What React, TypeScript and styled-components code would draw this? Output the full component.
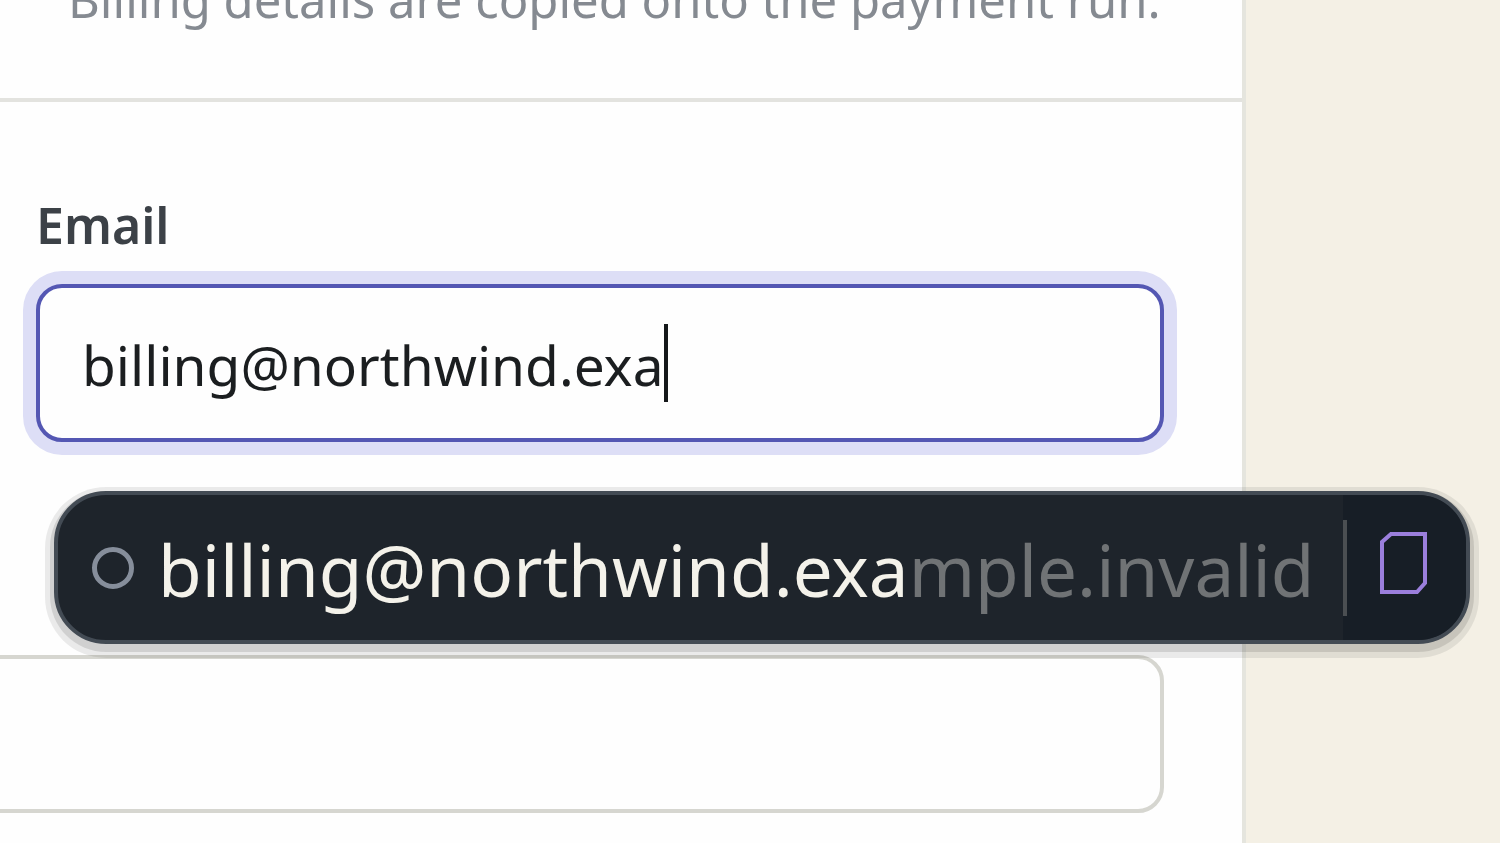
import React, { useState } from "react";
import styled, { createGlobalStyle } from "styled-components";

const GlobalStyle = createGlobalStyle`
  *, *::before, *::after { box-sizing: border-box; }
  body {
    margin: 0;
    background: #f4f0e5;
    font-family: "Noto Sans", "Open Sans", sans-serif;
    overflow: hidden;
  }
`;

const Page = styled.main`
  display: flex;
  min-height: 100vh;
  padding-right: 254px;
  overflow: hidden;
`;

const Card = styled.section`
  flex: 1;
  min-width: 0;
  background: #fefefe;
  border-right: 4px solid #e5e5de;
`;

const CardHeader = styled.header`
  display: flex;
  align-items: flex-end;
  height: 102px;
  padding: 0 68px 67px;
  border-bottom: 4px solid #e3e3df;
`;

const Note = styled.p`
  margin: 0;
  color: #858a91;
  font-size: 49px;
  line-height: 64px;
  white-space: nowrap;
`;

const Form = styled.form`
  display: flex;
  flex-direction: column;
  padding: 91px 78px 30px 36px;
`;

const Label = styled.label`
  align-self: flex-start;
  margin-bottom: 27px;
  color: #3c4147;
  font-size: 50px;
  font-weight: 600;
  line-height: 64px;
`;

const Field = styled.div`
  position: relative;
  margin-bottom: 213px;
`;

const InputFrame = styled.div`
  display: flex;
  align-items: center;
  height: 158px;
  padding: 0 42px;
  background: #fefefe;
  border: 4px solid #5457b3;
  border-radius: 26px;
  box-shadow: 0 0 0 13px #dddef6;
`;

const EmailInput = styled.input`
  field-sizing: content;
  padding: 4px 0 0;
  border: 0;
  outline: 0;
  background: transparent;
  color: #1b1e20;
  font: inherit;
  font-size: 55px;
  line-height: 80px;
  caret-color: transparent;
`;

const Caret = styled.span`
  width: 4px;
  height: 78px;
  background: #15181a;
`;

const PlainInput = styled.input`
  height: 158px;
  margin-left: -76px;
  padding: 0 40px;
  background: #fefefe;
  border: 4px solid #d6d6d0;
  border-radius: 26px;
  outline: 0;
  font: inherit;
  font-size: 55px;
`;

const Suggestion = styled.div`
  position: absolute;
  top: calc(100% + 49px);
  left: 18px;
  right: -306px;
  display: flex;
  align-items: stretch;
  height: 153px;
  overflow: hidden;
  background: #1e242b;
  border: 4px solid #434b54;
  border-radius: 52px;
  box-shadow: 0 4px 0 4px rgba(0, 0, 0, 0.11), 0 5px 0 9px rgba(0, 0, 0, 0.08);
`;

const SuggestionOption = styled.button`
  flex: 1;
  display: flex;
  align-items: center;
  gap: 24px;
  padding: 0 0 0 34px;
  border: 0;
  background: transparent;
  color: #f4f2ea;
  font: inherit;
  font-size: 71px;
  line-height: 96px;
  white-space: nowrap;
`;

const SuggestionText = styled.span`
  padding-top: 4px;
`;

const Ring = styled.span`
  flex: none;
  width: 42px;
  height: 42px;
  border: 5px solid #868e9b;
  border-radius: 50%;
`;

const Completion = styled.span`
  color: #707375;
`;

const SideAction = styled.button`
  display: flex;
  align-items: center;
  gap: 33px;
  flex: none;
  width: 123px;
  padding: 0;
  border: 0;
  background: #171e26;
`;

const Divider = styled.span`
  width: 4px;
  height: 96px;
  background: #4b4f52;
`;

const PageIcon = styled.svg`
  display: block;
  margin-bottom: 10px;
`;

export default function App() {
  const [email, setEmail] = useState("billing@northwind.exa");

  return (
    <>
      <GlobalStyle />
      <Page>
        <Card>
          <CardHeader>
            <Note>Billing details are copied onto the payment run.</Note>
          </CardHeader>
          <Form autoComplete="off">
            <Label htmlFor="email">Email</Label>
            <Field>
              <InputFrame>
                <EmailInput
                  id="email"
                  type="text"
                  inputMode="email"
                  value={email}
                  onChange={(e) => setEmail(e.target.value)}
                />
                <Caret />
              </InputFrame>
              <Suggestion>
                <SuggestionOption type="button">
                  <Ring />
                  <SuggestionText>
                    billing@northwind.exa<Completion>mple.invalid</Completion>
                  </SuggestionText>
                </SuggestionOption>
                <SideAction type="button" aria-label="Open entry">
                  <Divider />
                  <PageIcon width="48" height="62" viewBox="0 0 48 62" fill="none">
                    <path
                      d="M11 2H45V51L37 60H2V10Z"
                      stroke="#9b7fdc"
                      strokeWidth="4"
                    />
                  </PageIcon>
                </SideAction>
              </Suggestion>
            </Field>
            <PlainInput type="text" aria-label="Next field" />
          </Form>
        </Card>
      </Page>
    </>
  );
}
